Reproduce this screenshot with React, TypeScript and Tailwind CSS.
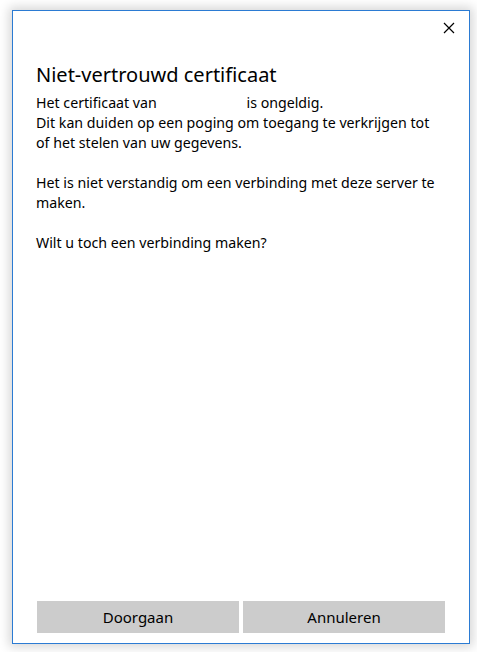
import React from "react";

export default function App() {
  return (
    <div className="w-[477px] h-[652px] bg-white overflow-hidden pt-[10px] pl-[12px]" style={{ fontFamily: '"Noto Sans", "Open Sans", sans-serif' }}>
      <div className="w-[458px] h-[634px] bg-white border border-[#2b7bd3] shadow-[0_0_10px_3px_rgba(0,0,0,0.16)] flex flex-col">
        <div className="flex justify-end pt-[10px] pr-[14px] h-[36px]">
          <svg width="12" height="12" viewBox="0 0 12 12" className="mt-[1px]">
            <path d="M1 1 L11 11 M11 1 L1 11" stroke="#000" strokeWidth="1.2" fill="none" />
          </svg>
        </div>
        <div className="pl-[23px] pr-[20px] flex-1">
          <h1 className="text-[20px] leading-[28px] text-black mt-[14px]">Niet-vertrouwd certificaat</h1>
          <div className="mt-[4px] text-[14.2px] leading-[20px] text-black">
            <p>Het certificaat van <span className="inline-block w-[86px]" />is ongeldig.</p>
            <p>
              Dit kan duiden op een poging om toegang te verkrijgen tot
              <br />
              of het stelen van uw gegevens.
            </p>
            <p className="mt-[20px]">
              Het is niet verstandig om een verbinding met deze server te
              <br />
              maken.
            </p>
            <p className="mt-[20px]">Wilt u toch een verbinding maken?</p>
          </div>
        </div>
        <div className="flex gap-[4px] pl-[24px] pb-[10px]">
          <div className="w-[202px] h-[32px] bg-[#cccccc] flex items-center justify-center text-[15px] text-black">Doorgaan</div>
          <div className="w-[202px] h-[32px] bg-[#cccccc] flex items-center justify-center text-[15px] text-black">Annuleren</div>
        </div>
      </div>
    </div>
  );
}
